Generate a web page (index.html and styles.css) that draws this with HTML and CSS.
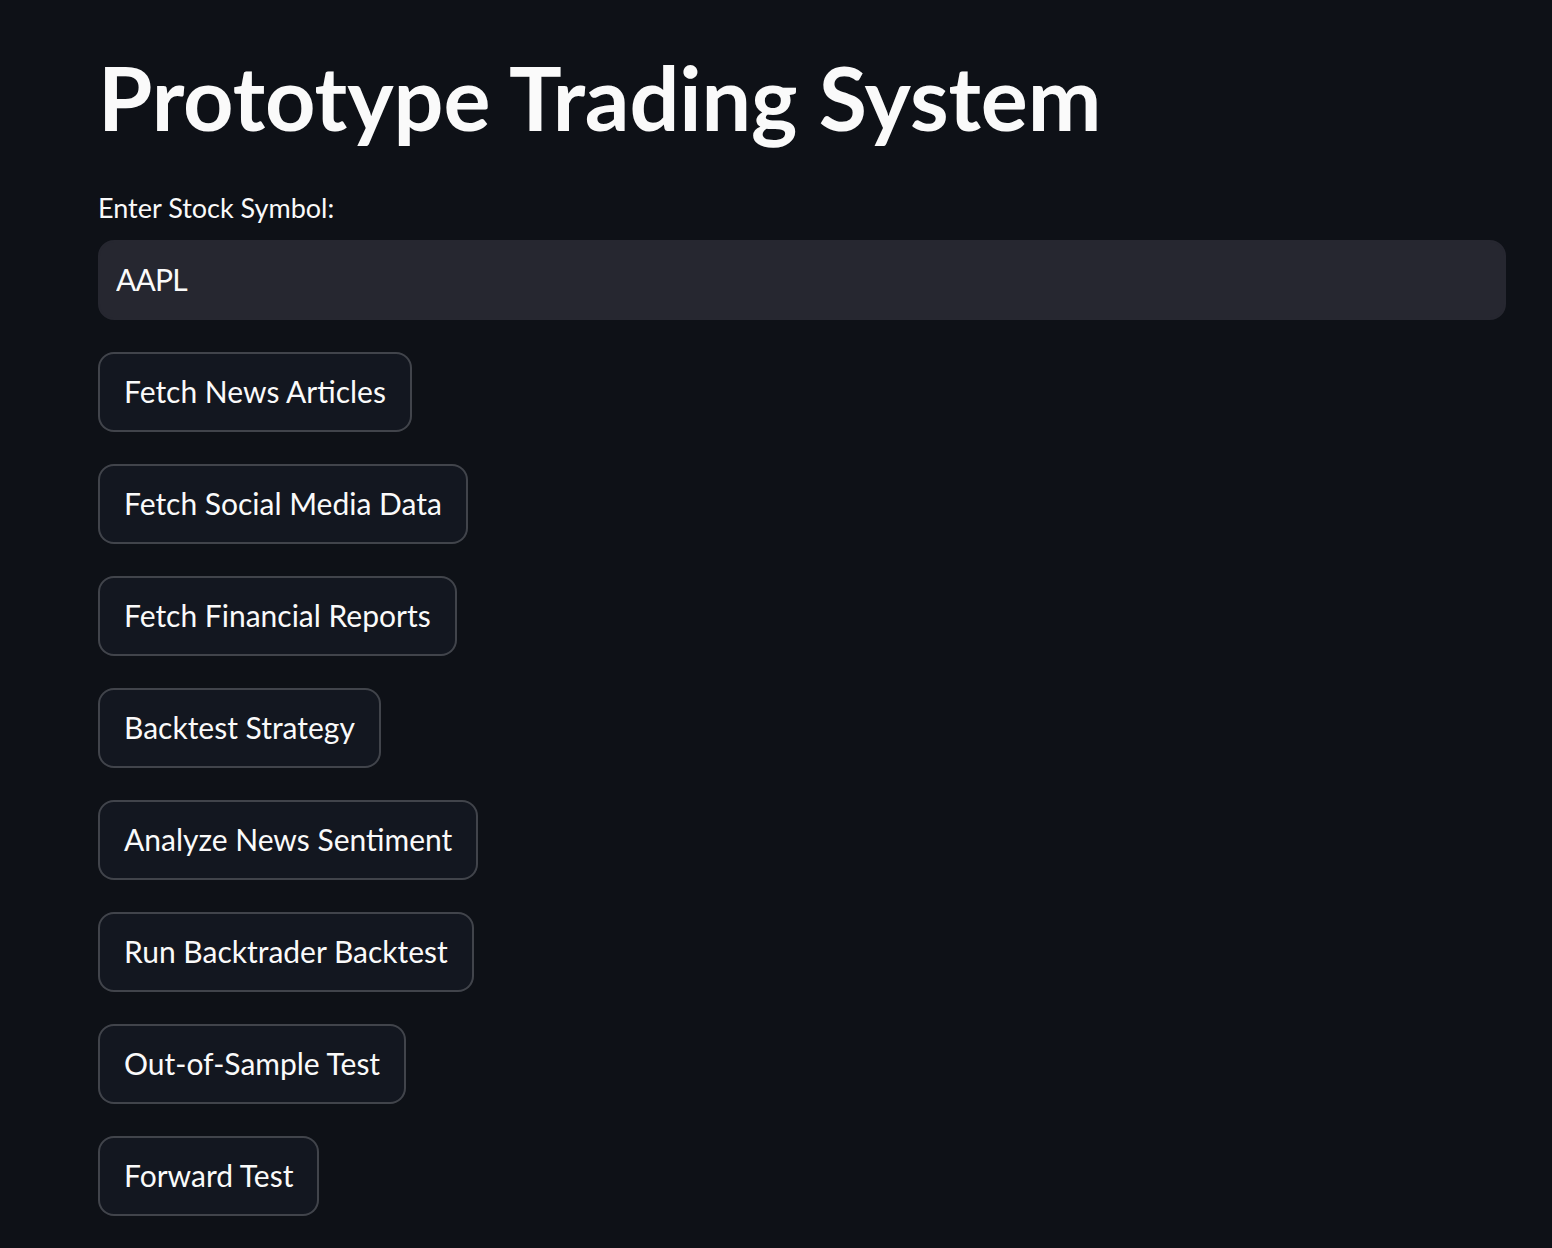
FILE: index.html
```html
<!DOCTYPE html>
<html lang="en">
<head>
<meta charset="utf-8">
<title>Prototype Trading System</title>
<link rel="stylesheet" href="styles.css">
</head>
<body>
<main class="app">
  <h1 class="title">Prototype Trading System</h1>
  <label class="field-label" for="symbol">Enter Stock Symbol:</label>
  <div class="input-wrap">
    <input id="symbol" class="text-input" type="text" value="AAPL">
  </div>
  <div class="buttons">
    <button class="btn">Fetch News Articles</button>
    <button class="btn">Fetch Social Media Data</button>
    <button class="btn">Fetch Financial Reports</button>
    <button class="btn">Backtest Strategy</button>
    <button class="btn">Analyze News Sentiment</button>
    <button class="btn">Run Backtrader Backtest</button>
    <button class="btn">Out-of-Sample Test</button>
    <button class="btn">Forward Test</button>
  </div>
</main>
</body>
</html>
```

FILE: styles.css
```css
html, body {
  margin: 0;
  padding: 0;
  background: #0e1117;
  color: #fafafa;
  font-family: "Lato", "Source Sans Pro", sans-serif;
}

.app {
  display: flex;
  flex-direction: column;
  align-items: flex-start;
  padding: 45px 46px 0 98px;
  height: 1248px;
  box-sizing: border-box;
  overflow: hidden;
}

.title {
  margin: 0;
  font-size: 88px;
  font-weight: 700;
  line-height: 1.2;
  letter-spacing: -0.1px;
}

.field-label {
  margin-top: 35px;
  font-size: 27px;
  line-height: 1.65;
  color: #fafafa;
}

.input-wrap {
  margin-top: 10px;
  align-self: stretch;
}

.text-input {
  display: block;
  width: 100%;
  height: 80px;
  box-sizing: border-box;
  border: 2px solid #262730;
  border-radius: 16px;
  background: #262730;
  color: #fafafa;
  font-family: inherit;
  font-size: 30px;
  letter-spacing: -0.8px;
  padding: 0 16px 2px;
  outline: none;
}

.buttons {
  display: flex;
  flex-direction: column;
  align-items: flex-start;
  gap: 32px;
  margin-top: 32px;
}

.btn {
  height: 80px;
  box-sizing: border-box;
  padding: 0 24px 2px;
  border: 2px solid rgba(250, 250, 250, 0.2);
  border-radius: 16px;
  background: #131720;
  color: #fafafa;
  font-family: inherit;
  font-size: 30px;
  letter-spacing: 0;
  line-height: 1.6;
}
```
